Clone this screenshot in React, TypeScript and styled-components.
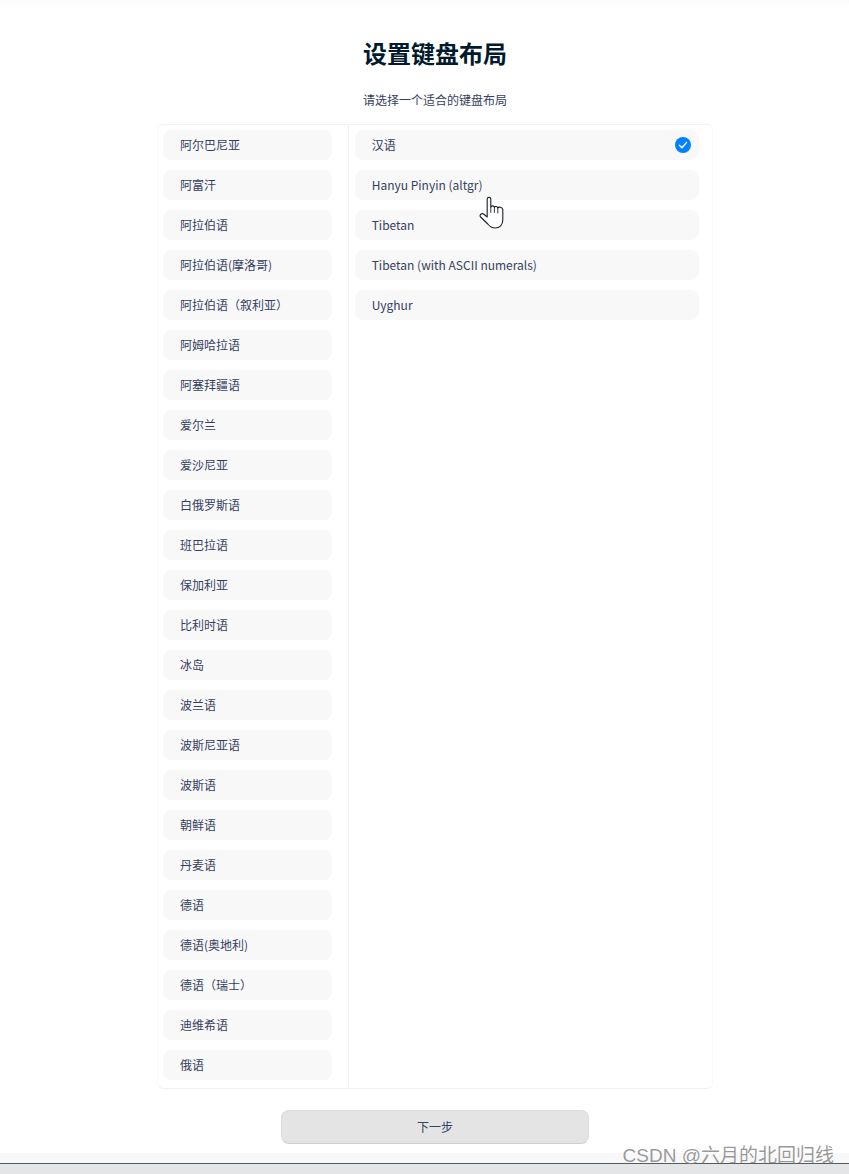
import styled, { createGlobalStyle } from "styled-components";

const languages = [
  "阿尔巴尼亚", "阿富汗", "阿拉伯语", "阿拉伯语(摩洛哥)", "阿拉伯语（叙利亚）",
  "阿姆哈拉语", "阿塞拜疆语", "爱尔兰", "爱沙尼亚", "白俄罗斯语",
  "班巴拉语", "保加利亚", "比利时语", "冰岛", "波兰语",
  "波斯尼亚语", "波斯语", "朝鲜语", "丹麦语", "德语",
  "德语(奥地利)", "德语（瑞士）", "迪维希语", "俄语",
];

const layouts = ["汉语", "Hanyu Pinyin (altgr)", "Tibetan", "Tibetan (with ASCII numerals)", "Uyghur"];

const GlobalStyle = createGlobalStyle`
  html, body {
    margin: 0;
    padding: 0;
    background: #fff;
    font-family: "Noto Sans CJK SC", sans-serif;
  }
`;

const Page = styled.div`
  position: relative;
  width: 849px;
  height: 1174px;
  overflow: hidden;
  display: flex;
  flex-direction: column;
  background: linear-gradient(#fafafa, #fff 8px);
`;

/* the installer's content area is wider than the captured window */
const Main = styled.main`
  flex: none;
  width: 870px;
  display: flex;
  flex-direction: column;
  align-items: center;
`;

const Title = styled.h1`
  margin: 35px 0 0;
  height: 36px;
  line-height: 36px;
  font-size: 24px;
  font-weight: 700;
  color: #001a2e;
`;

const Subtitle = styled.p`
  margin: 20px 0 0;
  height: 18px;
  line-height: 18px;
  font-size: 12px;
  color: #34405f;
`;

const Panel = styled.div`
  box-sizing: border-box;
  margin-top: 15px;
  width: 556px;
  height: 965px;
  display: flex;
  border: 1px solid #f9f9f9;
  border-top-color: #f3f3f3;
  border-bottom-color: #f1f1f1;
  border-radius: 6px;
`;

const Column = styled.div<{ $wide?: boolean }>`
  box-sizing: border-box;
  display: flex;
  flex-direction: column;
  gap: 10px;
  padding: 5px 0 0 ${(p) => (p.$wide ? "6px" : "5px")};
  width: ${(p) => (p.$wide ? "364px" : "191px")};
  ${(p) => (p.$wide ? "" : "border-right: 1px solid #f0f0f0;")}
`;

const Item = styled.div<{ $wide?: boolean }>`
  flex: none;
  display: flex;
  align-items: center;
  justify-content: space-between;
  box-sizing: border-box;
  width: ${(p) => (p.$wide ? "344px" : "169px")};
  height: 30px;
  padding: 0 8px 2px 17px;
  border-radius: 8px;
  background: #f8f8f8;
  font-size: 12px;
  color: #34405f;

  svg {
    margin-bottom: -2px;
  }
`;

const NextButton = styled.button`
  box-sizing: border-box;
  margin-top: 21px;
  width: 308px;
  height: 34px;
  padding: 0 0 2px;
  border: 1px solid #dcdcdc;
  border-bottom-color: #cfcfcf;
  border-radius: 8px;
  background: #e4e4e4;
  color: #34405f;
  font-size: 12px;
  font-family: "Noto Sans CJK SC", sans-serif;
`;

const BottomBar = styled.div`
  flex: none;
  margin-top: 9px;
  width: 100%;
  height: 10px;
  background: #f8f8f8;
`;

const StatusBar = styled.div`
  flex: 1;
  width: 100%;
  background: #e4e5e7;
  border-top: 1px solid #555a60;
`;

const Cursor = styled.svg`
  position: absolute;
  left: 479px;
  top: 196px;
`;

const Watermark = styled.span`
  position: absolute;
  right: 15px;
  top: 1142px;
  font-size: 19px;
  line-height: 28px;
  color: rgba(120, 120, 120, 0.75);
  font-family: "Liberation Sans", "Noto Sans CJK SC", sans-serif;
  white-space: nowrap;
`;

const CheckIcon = () => (
  <svg width="16" height="16" viewBox="0 0 16 16">
    <circle cx="8" cy="8" r="8" fill="#0081ff" />
    <path d="M4.4 8.3 7 10.8 11.6 5.4" fill="none" stroke="#fff" strokeWidth="1.4" strokeLinecap="round" strokeLinejoin="round" />
  </svg>
);

const HandCursor = () => (
  <Cursor width="26" height="34" viewBox="0 0 26 34">
    <path
      d="M8.2 21 V3 C8.2 0.8 11.8 0.8 11.8 3 V11 C12.2 9.4 15 9.4 15.4 11.4 C15.9 10 18.4 10.2 18.7 12 C19.4 10.6 23.6 10.8 23.8 13.6 V24 C23.8 28.8 20.6 32 16.4 32 C13 32 10.6 30.4 8.8 28 L1.6 21 C0 19 2.6 16.8 4.6 18 Z"
      fill="#fff"
      stroke="#1a1f2b"
      strokeWidth="1.1"
      strokeLinejoin="round"
    />
    <path d="M11.8 11 V16.5 M15.4 11.4 V16.5 M18.8 12 V17" fill="none" stroke="#1a1f2b" strokeWidth="0.9" strokeLinecap="round" />
  </Cursor>
);

export default function App() {
  return (
    <Page>
      <GlobalStyle />
      <Main>
        <Title>设置键盘布局</Title>
        <Subtitle>请选择一个适合的键盘布局</Subtitle>
        <Panel>
          <Column>
            {languages.map((name) => (
              <Item key={name}>{name}</Item>
            ))}
          </Column>
          <Column $wide>
            {layouts.map((name, i) => (
              <Item $wide key={name}>
                {name}
                {i === 0 && <CheckIcon />}
              </Item>
            ))}
          </Column>
        </Panel>
        <NextButton>下一步</NextButton>
      </Main>
      <BottomBar />
      <StatusBar />
      <HandCursor />
      <Watermark>CSDN @六月的北回归线</Watermark>
    </Page>
  );
}
